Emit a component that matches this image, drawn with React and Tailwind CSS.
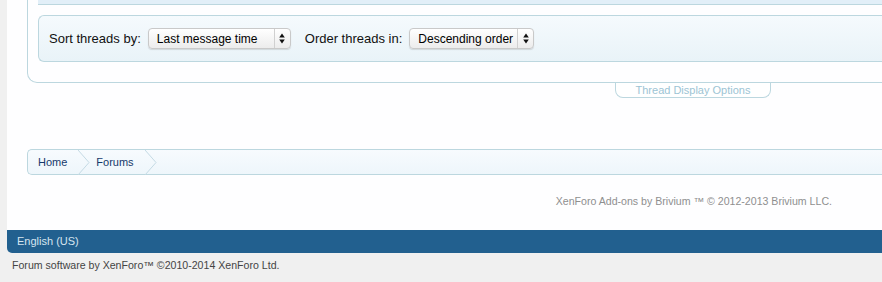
import React from 'react';

const font = { fontFamily: '"Liberation Sans", Arial, sans-serif' };

const SelectBox = ({ label, width }) => (
    <div
        className={`flex h-[21px] items-stretch rounded-[4px] border border-[#c9c9c9] bg-gradient-to-b from-white to-[#ececec] shadow-[0_1px_1px_rgba(0,0,0,0.12)] ${width}`}
    >
        <span className="flex flex-1 items-center pl-[8px] text-[12px] text-black">{label}</span>
        <span className="flex w-[16px] items-center justify-center border-l border-[#d0d0d0]">
            <svg width="6" height="11" viewBox="0 0 6 11">
                <path d="M3 0.5 L5.8 4.5 L0.2 4.5 Z" fill="#111" />
                <path d="M3 10.5 L5.8 6.5 L0.2 6.5 Z" fill="#111" />
            </svg>
        </span>
    </div>
);

const Chevron = () => (
    <svg width="12" height="25" viewBox="0 0 12 25" className="shrink-0">
        <path d="M0 0 L11 12.5 L0 25" fill="none" stroke="#c4dae4" strokeWidth="1" />
    </svg>
);

const App = () => {
    return (
        <div className="h-[282px] w-full overflow-hidden bg-[#f0f0f0]" style={font}>
            {/* main content */}
            <div className="ml-[7px] h-[230px] bg-[#fefeff] pl-[20px]">
                {/* sort / order options box */}
                <div className="rounded-bl-[10px] border-b border-l border-[#bcd7df] pl-[10px]">
                    <div className="h-[5px] border-b border-[#bcd7df] bg-[#e2eff8]" />
                    <div className="mt-[10px] flex h-[47px] items-center rounded-l-[6px] border border-r-0 border-[#bcd7df] bg-gradient-to-b from-[#f5fafd] to-[#e9f3f8] pl-[10px] text-[13px] text-[#111]">
                        <span>Sort threads by:</span>
                        <div className="ml-[7px]">
                            <SelectBox label="Last message time" width="w-[143px]" />
                        </div>
                        <span className="ml-[14px]">Order threads in:</span>
                        <div className="ml-[7px]">
                            <SelectBox label="Descending order" width="w-[125px]" />
                        </div>
                    </div>
                    <div className="h-[20px]" />
                </div>
                <div className="ml-[588px] flex h-[15px] w-[156px] items-center justify-center rounded-b-[8px] border-x border-b border-[#bcd7df] bg-white text-[11px] text-[#9dc4d4]">
                    Thread Display Options
                </div>

                {/* breadcrumb */}
                <div className="mt-[51px] flex h-[26px] items-center rounded-l-[5px] border border-r-0 border-[#bcd7df] bg-gradient-to-b from-[#f7fbfe] to-[#eef6fb] text-[11px] text-[#16396b]">
                    <span className="pl-[10px] pr-[11px]">Home</span>
                    <Chevron />
                    <span className="pl-[6px] pr-[11px]">Forums</span>
                    <Chevron />
                </div>

                <div className="mt-[19px] pr-[50px] text-right text-[10.6px] text-[#8f8f8f]">
                    XenForo Add-ons by Brivium ™ © 2012-2013 Brivium LLC.
                </div>
            </div>

            {/* footer bar */}
            <div className="ml-[7px] flex h-[23px] items-center rounded-bl-[5px] bg-[#22608f] pl-[10px] text-[11px] text-[#d6e5f0]">
                English (US)
            </div>
            <div className="pl-[12px] pt-[5px] text-[10.6px] text-[#444]">
                Forum software by XenForo™ ©2010-2014 XenForo Ltd.
            </div>
        </div>
    );
};

export default App;
